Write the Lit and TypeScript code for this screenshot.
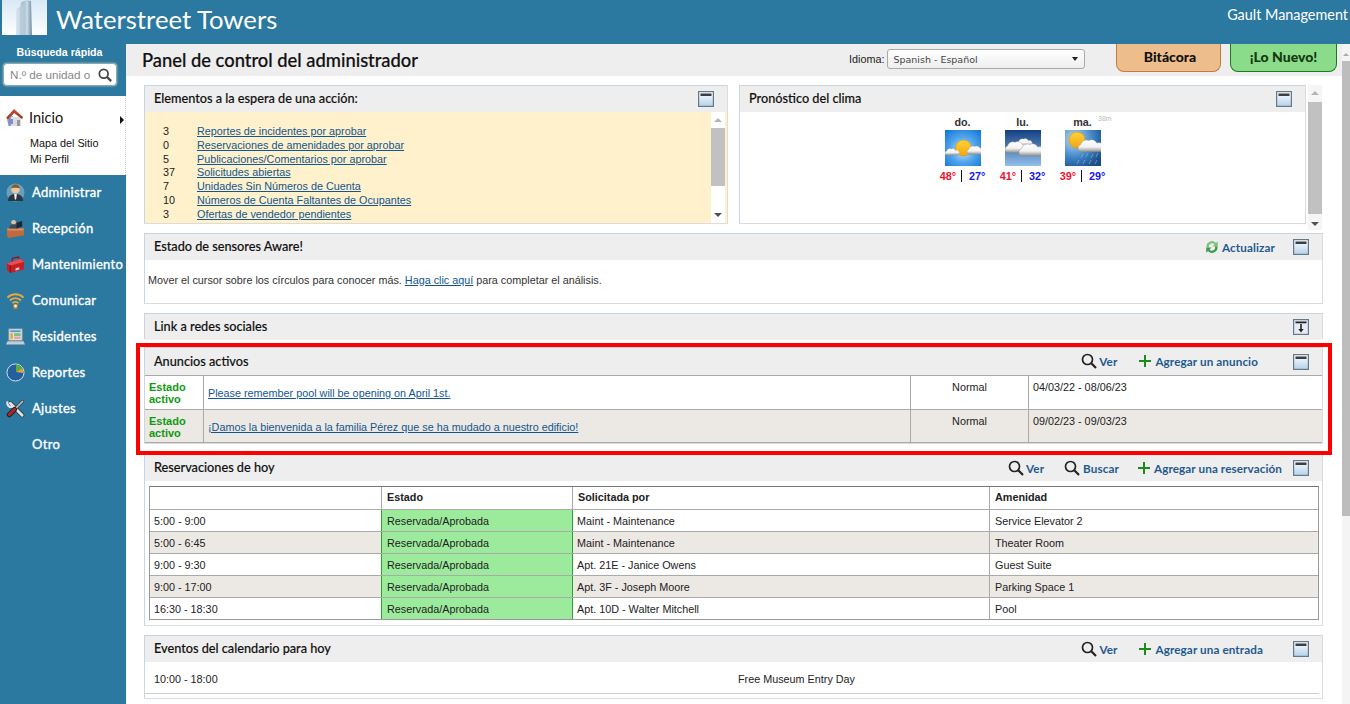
import { LitElement, html, css, svg } from "lit";
import { customElement } from "lit/decorators.js";

const minIcon = html`<svg class="mini" width="16" height="16" viewBox="0 0 16 16"><defs><linearGradient id="mg" x1="0" y1="0" x2="0" y2="1"><stop offset="0" stop-color="#ffffff"/><stop offset="1" stop-color="#b4d2ea"/></linearGradient></defs><rect x=".6" y=".6" width="14.800" height="14.800" fill="url(#mg)" stroke="#66798a" stroke-width="1.200"/><rect x="2.500" y="2.500" width="11" height="2.500" fill="#3b3f44"/></svg>`;
const expandIcon = html`<svg class="mini" width="16" height="16" viewBox="0 0 16 16"><rect x=".6" y=".6" width="14.800" height="14.800" fill="#e4edf4" stroke="#66798a" stroke-width="1.200"/><rect x="2.500" y="2.500" width="11" height="1.800" fill="#222"/><path d="M8 5v5.500" stroke="#222" stroke-width="1.600"/><path d="M5.300 10 8 13.500 10.700 10z" fill="#222"/></svg>`;
const lens = html`<svg width="16" height="16" viewBox="0 0 16 16"><circle cx="6.500" cy="6.500" r="5" fill="none" stroke="#222" stroke-width="1.700"/><path d="M10.300 10.300 15 15" stroke="#222" stroke-width="2.200"/></svg>`;
const plus = html`<svg width="14" height="14" viewBox="0 0 14 14"><path d="M7 1v12M1 7h12" stroke="#1c8a1c" stroke-width="2"/></svg>`;
const refresh = html`<svg width="14" height="14" viewBox="0 0 14 14"><path d="M1.500 7.500A5.500 5.500 0 0 1 11 3L12.800 1.200V6.500H7.500L9.500 4.500A3.200 3.200 0 0 0 4 7.500Z" fill="#7cc27c"/><path d="M12.500 6.500A5.500 5.500 0 0 1 3 11L1.200 12.800V7.500H6.500L4.500 9.500A3.200 3.200 0 0 0 10 6.500Z" fill="#3d9a50"/></svg>`;

const sideIcons: Record<string, unknown> = {
  home: svg`<defs><linearGradient id="rf" x1="0" y1="0" x2="0" y2="1"><stop offset="0" stop-color="#c9543c"/><stop offset="1" stop-color="#93301f"/></linearGradient></defs><path d="M7 9 13 13v6H3.500L2 12z" fill="#8f99ad"/><path d="M6 10h10v9H6z" fill="#dcdde2"/><path d="M1 11 9 2l9 8-1 2-8-6-6 6z" fill="url(#rf)"/><path d="M9 6 4 11v-1l5-6z" fill="#b8402c"/><rect x="4" y="12" width="4" height="5" fill="#7d8fd0"/><rect x="12" y="13" width="3" height="6" fill="#999"/>`,
  admin: svg`<circle cx="10" cy="10" r="9.500" fill="#dfe8ee" opacity=".35"/><path d="M2 19c0-5 3-7.500 8-7.500s8 2.500 8 7.500z" fill="#2a3640"/><path d="M8.500 11.500h3l-.7 5-.8 1.500-.8-1.500z" fill="#eef2f4"/><circle cx="10" cy="6.500" r="4.500" fill="#eec69a"/><path d="M5.500 6a4.500 4.500 0 0 1 9 0c-1.500-1.500-7.500-1.500-9 0z" fill="#7a5c30"/>`,
  rec: svg`<path d="M1 10h18v7l-16 3-2-2z" fill="#c06a3e"/><path d="M1 10h18l-1 2H2z" fill="#dc8e5f"/><circle cx="8" cy="3.500" r="2.500" fill="#dcc0a4"/><path d="M3.500 10c0-3 2-4.500 4.500-4.500s4 1.500 4 4.500z" fill="#3f4a52"/><path d="M11 4l6-2v6l-6 2z" fill="#20262b"/>`,
  mant: svg`<path d="M1 9 15 4l4 3v8L5 19l-4-3z" fill="#c41f28"/><path d="M1 9l14-5 4 3-14 4z" fill="#ea4e52"/><path d="M5 11v8l-1-.3v-8z" fill="#7d0f15"/><path d="M10 14l4-1.200v2.500L10 16.500z" fill="#e7c2b0"/><path d="M6 6.500l1-3 6-1.500 1 2" fill="none" stroke="#8f1219" stroke-width="1.400"/>`,
  com: svg`<g fill="none" stroke="#e9a83a" stroke-width="2"><path d="M1.500 7a12 12 0 0 1 17 0"/><path d="M4.200 10a8 8 0 0 1 11.600 0"/><path d="M6.800 12.800a4.400 4.400 0 0 1 6.400 0"/></g><path d="M7.500 14h5l-.5 5H8z" fill="#c78428"/><circle cx="10" cy="15.800" r="1.500" fill="#f8f0e0"/>`,
  res: svg`<rect x="3" y="2" width="14" height="12" fill="#e8eef2" stroke="#8a98a2"/><rect x="4.500" y="3.500" width="11" height="2" fill="#4f93d0"/><rect x="4.500" y="6.500" width="3" height="6" fill="#e9a83a"/><rect x="8.500" y="6.500" width="7" height="3" fill="#7cc07c"/><rect x="8.500" y="10" width="7" height="2.500" fill="#dca3a3"/><path d="M1.500 15h17l1.500 3.500H0z" fill="#c7ccd0"/>`,
  rep: svg`<circle cx="10" cy="10" r="9" fill="#245f9e" stroke="#dbe7f0" stroke-width="1"/><path d="M10.500 9.500V1.500a8 8 0 0 1 6.500 4z" fill="#59ad3a"/><path d="M10.500 9.500 17 5.500a8 8 0 0 1 1 5z" fill="#e5a62f"/>`,
  aju: svg`<g fill="none" stroke-linecap="round"><path d="M4.500 4.500 17 17" stroke="#33383c" stroke-width="4.600"/><path d="M4.500 4.500 17 17" stroke="#dfe3e6" stroke-width="3"/><path d="M1.500 3.500A4 4 0 0 0 7 8" stroke="#dfe3e6" stroke-width="2.400"/><path d="M17.500 2.500 9 11" stroke="#33383c" stroke-width="3"/><path d="M17.500 2.500 9 11" stroke="#bcc2c6" stroke-width="1.600"/><path d="M9 11 3.500 16.500" stroke="#1d1d1d" stroke-width="5.200"/><path d="M9 11 3.500 16.500" stroke="#b02424" stroke-width="3.400"/></g>`,
};

const nav = [
  ["admin", "Administrar"],
  ["rec", "Recepción"],
  ["mant", "Mantenimiento"],
  ["com", "Comunicar"],
  ["res", "Residentes"],
  ["rep", "Reportes"],
  ["aju", "Ajustes"],
  ["", "Otro"],
];

const waiting = [
  ["3", "Reportes de incidentes por aprobar"],
  ["0", "Reservaciones de amenidades por aprobar"],
  ["5", "Publicaciones/Comentarios por aprobar"],
  ["37", "Solicitudes abiertas"],
  ["7", "Unidades Sin Números de Cuenta"],
  ["10", "Números de Cuenta Faltantes de Ocupantes"],
  ["3", "Ofertas de vendedor pendientes"],
];

const cloud = (x: number, y: number, s: number) => svg`<g transform="translate(${x} ${y}) scale(${s})" fill="url(#cl)" stroke="#8a8a8a" stroke-width=".3"><path d="M1.500 11a3 3 0 0 1 .5-5.500 4.500 4.500 0 0 1 6-3 4.500 4.500 0 0 1 6 2 3.500 3.500 0 0 1 3 6.500z"/></g>`;
const wDefs = svg`<defs><linearGradient id="cl" x1="0" y1="0" x2="0" y2="1"><stop offset="0" stop-color="#fff"/><stop offset=".6" stop-color="#f2f2f2"/><stop offset="1" stop-color="#8f8f8f"/></linearGradient><linearGradient id="sun" x1="0" y1="0" x2="0" y2="1"><stop offset="0" stop-color="#ffd23a"/><stop offset="1" stop-color="#f4a70e"/></linearGradient><radialGradient id="sky1" cx=".5" cy=".55" r=".7"><stop offset="0" stop-color="#cfeaff"/><stop offset=".5" stop-color="#52a6ec"/><stop offset="1" stop-color="#1478d8"/></radialGradient><linearGradient id="sky2" x1="0" y1="0" x2="0" y2="1"><stop offset="0" stop-color="#143f82"/><stop offset="1" stop-color="#92bfea"/></linearGradient><radialGradient id="sky3" cx=".25" cy=".25" r=".9"><stop offset="0" stop-color="#b7dcf6"/><stop offset=".6" stop-color="#3c82c4"/><stop offset="1" stop-color="#1b4c86"/></radialGradient></defs>`;
const weather = [
  { d: "do.", hi: "48°", lo: "27°", art: svg`<rect width="36" height="36" fill="url(#sky1)"/><circle cx="18.500" cy="18" r="8" fill="url(#sun)" stroke="#c98a1a" stroke-width=".5"/>${cloud(0, 17, .75)}${cloud(22, 14, .95)}` },
  { d: "lu.", hi: "41°", lo: "32°", art: svg`<rect width="36" height="36" fill="url(#sky2)"/>${cloud(12, 7, .8)}${cloud(0, 9, 1.250)}${cloud(14, 11, 1.350)}` },
  { d: "ma.", hi: "39°", lo: "29°", art: svg`<rect width="36" height="36" fill="url(#sky3)"/><circle cx="12" cy="10" r="8" fill="url(#sun)" stroke="#c98a1a" stroke-width=".5"/>${cloud(13, 7, 1.350)}<g stroke="#9cc0de" stroke-width=".7" opacity=".8"><path d="M18 24l-2 4M23 23l-2 4M28 24l-2 4M33 23l-2 4M14 30l-2 4M20 30l-2 4M26 30l-2 4M32 30l-2 4"/></g>` },
];

const reservations = [
  ["5:00 - 9:00", "Maint - Maintenance", "Service Elevator 2"],
  ["5:00 - 6:45", "Maint - Maintenance", "Theater Room"],
  ["9:00 - 9:30", "Apt. 21E - Janice Owens", "Guest Suite"],
  ["9:00 - 17:00", "Apt. 3F - Joseph Moore", "Parking Space 1"],
  ["16:30 - 18:30", "Apt. 10D - Walter Mitchell", "Pool"],
];

@customElement("app-root")
export class AppRoot extends LitElement {
  static styles = css`
    :host { display: block; width: 1350px; height: 704px; overflow: hidden; font-family: "Liberation Sans", Arial, sans-serif; font-size: 10.800px; color: #222; background: #fff; }
    * { box-sizing: border-box; }
    a { color: #13568f; text-decoration: underline; }
    .top { height: 44px; background: #2b78a0; display: flex; color: #fff; font-family: Lato, sans-serif; }
    .logo { margin-left: 2px; width: 45px; height: 35px; display: block; flex: none; }
    .brand { margin-left: 9px; font-size: 25.700px; line-height: 38px; }
    .org { margin-left: auto; font-size: 14.400px; line-height: 30px; padding-right: 2px; white-space: nowrap; }
    .body { display: flex; height: 660px; }
    .side { width: 126px; background: #2b78a0; flex: none; }
    .quick { height: 52px; color: #fff; font-weight: bold; padding-top: 2px; }
    .quick .lbl { line-height: 12px; font-size: 10.600px; text-align: center; padding-right: 7px; }
    .sbox { margin: 5px 0 0 3px; width: 114px; height: 23px; background: #fff; border: 1px solid #8aa; border-radius: 4px; box-shadow: 0 0 2px #ccc; display: flex; align-items: center; justify-content: space-between; padding: 0 4px 0 6px; color: #888; font-weight: normal; font-size: 11.700px; }
    .sbox span { white-space: nowrap; }
    .home { height: 79px; background: #fff; padding: 12px 0 0 0; position: relative; color: #111; border-right: 1px dotted #ccc; }
    .home .row { display: flex; align-items: center; padding-left: 5px; font-family: Lato, sans-serif; font-size: 14.500px; gap: 4px; height: 18px; }
    .home .arrow { position: absolute; left: 120px; top: 20px; width: 0; height: 0; border-left: 4px solid #111; border-top: 4px solid transparent; border-bottom: 4px solid transparent; }
    .home .sub { padding: 9px 0 0 30px; line-height: 16px; }
    .nav { display: flex; flex-direction: column; }
    .nav .item { height: 36px; display: flex; align-items: center; color: #fff; font-family: Lato, sans-serif; font-size: 13px; font-weight: 400; -webkit-text-stroke: .35px #fff; letter-spacing: .3px; padding: 0 0 2px 6px; gap: 7px; white-space: nowrap; }
    .nav .ic { width: 19px; height: 19px; flex: none; }
    .main { flex: 1; min-width: 0; display: flex; flex-direction: column; position: relative; }
    .title { height: 32px; background: #eee; display: flex; align-items: center; padding: 0 8px 0 16px; position: relative; flex: none; }
    .title h1 { margin: 0; font-family: Lato, sans-serif; font-weight: 500; font-size: 18.350px; color: #111; -webkit-text-stroke: .2px #111; }
    .lang { position: absolute; left: 723px; top: 5px; display: flex; align-items: center; gap: 3px; }
    .sel { width: 198px; height: 20px; border: 1px solid #aaa; border-radius: 3px; background: linear-gradient(#fff, #eee); display: flex; align-items: center; justify-content: space-between; padding: 0 6px 0 5px; color: #444; font-family: "DejaVu Sans", sans-serif; font-size: 9.500px; }
    .sel i { width: 0; height: 0; border-top: 4px solid #222; border-left: 3.500px solid transparent; border-right: 3.500px solid transparent; }
    .btn { position: absolute; top: 0; height: 28px; border-radius: 0 0 8px 8px; font-family: Lato, sans-serif; font-weight: 900; font-size: 14px; display: flex; align-items: center; justify-content: center; padding-bottom: 2px; }
    .b1 { left: 990px; width: 105px; padding-left: 3px; background: #eebd8c; border: 1px solid #c17c41; border-top: 0; color: #111; }
    .b2 { left: 1104px; width: 107px; background: #8adb8a; border: 1px solid #1c7a1c; border-top: 0; color: #15380f; }
    .scroll { position: absolute; left: 1216px; top: 0; width: 8px; height: 660px; background: #f4f4f4; }
    .scroll .up { position: absolute; left: 1px; top: 9px; border-bottom: 3px solid #aaa; border-left: 3px solid transparent; border-right: 3px solid transparent; }
    .scroll .th { position: absolute; left: 0; top: 17px; width: 8px; height: 455px; background: #bdbdbd; }
    .content { padding: 9px 0 0 18px; display: flex; flex-direction: column; gap: 9px; width: 1197px; }
    .toprow { display: flex; height: 139px; }
    .panel { border: 1px solid #c8d6e2; background: #fff; border-bottom-color: #dcdcdc; border-right-color: #dcdcdc; display: flex; flex-direction: column; }
    .ph { height: 26px; flex: none; background: #eee; display: flex; align-items: center; padding: 0 13px 0 9px; position: relative; }
    .ph h2 { margin: 0; padding-bottom: 2px; font-family: Lato, sans-serif; font-weight: 500; font-size: 12.700px; color: #111; flex: 1; -webkit-text-stroke: .15px #111; }
    .acts { display: flex; align-items: center; font-family: Lato, sans-serif; font-size: 11.700px; font-weight: 700; letter-spacing: .1px; color: #1f5a8f; padding-bottom: 1px; }
    .act { display: flex; align-items: center; gap: 2px; }
    .act.add { gap: 3px; margin-left: 20px; }
    .act.add.w { margin-left: 21px; }
    .act.add.t { margin-left: 18px; }
    .mini { margin-left: 11px; display: block; flex: none; }
    .wait { width: 584px; }
    .waitbody { flex: 1; background: #fff1cc; position: relative; padding: 13px 0 0 18px; line-height: 13.800px; }
    .waitrow { display: flex; }
    .waitrow .n { width: 34px; }
    .vs { position: absolute; width: 14px; top: 0; bottom: 0; right: 2px; background: #f5f5f5; }
    .wait .vs { background: #fff; }
    .vs .th { position: absolute; left: 0; width: 14px; background: #c1c1c1; }
    .vs .u, .vs .d { position: absolute; left: 3px; border-left: 4px solid transparent; border-right: 4px solid transparent; }
    .vs .u { top: 6px; border-bottom: 4px solid #b5b5b5; }
    .vs .d { bottom: 6px; border-top: 4px solid #505050; }
    .vs.long { left: 0; right: 0; bottom: -6px; }
    .vs.long .d { bottom: 4px; }
    .vs.long .th { top: 17px; height: 112px; }
    .vs .th.small { top: 16px; height: 58px; }
    .clima { width: 567px; margin-left: 11px; }
    .wx { display: flex; justify-content: center; padding: 4px 0 0 0; gap: 24px; position: relative; }
    .wdefs { position: absolute; }
    .wd { width: 36px; display: flex; flex-direction: column; align-items: center; }
    .wd .nm { font-weight: bold; line-height: 13px; color: #333; height: 14px; }
    .wd svg { display: block; }
    .tmp { font-weight: bold; margin-top: 4px; display: flex; white-space: nowrap; justify-content: center; line-height: 12px; }
    .hi { color: #f0102a; padding-right: 5px; }
    .lo { color: #1515ee; padding-left: 7px; border-left: 1px solid #111; }
    .age { position: absolute; left: 358px; top: 3px; font-size: 7px; color: #bbb; }
    .outer { position: relative; width: 15px; margin-left: 2px; flex: none; }
    .aw { height: 71px; }
    .awb { padding: 14px 0 0 3px; line-height: 13px; color: #333; }
    .link { height: 26px; border-bottom: 0; }
    .ann { height: 97px; position: relative; margin-top: -1px; }
    .ann .ph { height: 28px; border-bottom: 1px solid #aaa; }
    .annrow { height: 34px; display: grid; grid-template-columns: 59px 707px 118px 1fr; border-bottom: 1px solid #aaa; }
    .annrow > div { border-right: 1px solid #aaa; padding: 5px 4px 0 4px; line-height: 12px; }
    .annrow > div:last-child { border-right: 0; }
    .alt { background: #ece8e4; }
    .annrow .st { color: #0f9b0f; font-weight: bold; font-size: 11px; }
    .annrow .tx { padding-top: 11px; }
    .annrow .ct { text-align: center; padding-right: 4px; }
    .redbox { position: absolute; left: 10px; top: 299px; width: 1196px; height: 112px; border: 4px solid #f00; pointer-events: none; }
    .rsv { height: 171px; margin-top: 2px; border-top: 0; }
    .rtable { margin: 5px 3px 0 4px; border: 1px solid #999; border-top-color: #777; }
    .rrow { display: grid; grid-template-columns: 232px 191px 417px 1fr; height: 22px; border-top: 1px solid #aaa; }
    .rrow > div { border-right: 1px solid #aaa; padding: 0 4px; line-height: 22px; overflow: hidden; white-space: nowrap; }
    .rrow.head { border-top: 0; font-weight: bold; }
    .rrow.head > div { padding-left: 5px; line-height: 21px; }
    .rrow > div:last-child { border-right: 0; padding-left: 5px; }
    .rrow .g { background: #9ceb9c; border-left: 1px solid #2ea02e; border-right: 1px solid #2ea02e; margin-left: -1px; padding-left: 5px; }
    .ev { height: 64px; }
    .evb { position: relative; margin: 0 3px 0 0; height: 32px; border-bottom: 1px solid #c8d0d6; padding: 11px 0 0 9px; line-height: 12px; }
    .evb .c { position: absolute; left: 593px; top: 11px; }
    .s7 { width: 7px; }
    .s24 { width: 24px; }
    .s19 { width: 19px; }
  `;

  render() {
    return html`
      <div class="top">
        <svg class="logo" viewBox="0 0 45 35">
          <defs><linearGradient id="tw" x1="0" y1="0" x2="1" y2="0"><stop offset="0" stop-color="#dbe8f0"/><stop offset=".45" stop-color="#a9c0d2"/><stop offset=".7" stop-color="#c4d6e2"/><stop offset="1" stop-color="#748ea6"/></linearGradient><linearGradient id="sk" x1="0" y1="0" x2="0" y2="1"><stop offset="0" stop-color="#d8e9f5"/><stop offset="1" stop-color="#ffffff"/></linearGradient></defs>
          <rect width="45" height="35" fill="url(#sk)"/>
          <path d="M14 35V9L18 7 19 2 25 0 29 1 30 35Z" fill="url(#tw)"/>
          <path d="M17 10V35M21 5V35M25 2V35" stroke="#eaf2f7" stroke-width=".5" opacity=".7"/>
        </svg>
        <div class="brand">Waterstreet Towers</div>
        <div class="org">Gault Management</div>
      </div>
      <div class="body">
        <div class="side">
          <div class="quick">
            <div class="lbl">Búsqueda rápida</div>
            <div class="sbox"><span>N.º de unidad o</span><svg width="14" height="14" viewBox="0 0 16 16"><circle cx="6.500" cy="6.500" r="5" fill="none" stroke="#444" stroke-width="2"/><path d="M10.300 10.300 15 15" stroke="#444" stroke-width="2.600"/></svg></div>
          </div>
          <div class="home">
            <div class="row"><svg width="20" height="20" viewBox="0 0 20 20">${sideIcons.home}</svg><span>Inicio</span></div>
            <span class="arrow"></span>
            <div class="sub">Mapa del Sitio<br />Mi Perfil</div>
          </div>
          <div class="nav">
            ${nav.map(([ic, label]) => html`<div class="item"><svg class="ic" viewBox="0 0 20 20">${ic ? sideIcons[ic] : ""}</svg><span>${label}</span></div>`)}
          </div>
        </div>
        <div class="main">
          <div class="title">
            <h1>Panel de control del administrador</h1>
            <div class="lang"><span>Idioma:</span><div class="sel"><span>Spanish - Español</span><i></i></div></div>
            <div class="btn b1">Bitácora</div>
            <div class="btn b2">¡Lo Nuevo!</div>
          </div>
          <div class="scroll"><span class="up"></span><div class="th"></div></div>
          <div class="content">
            <div class="toprow">
              <div class="panel wait">
                <div class="ph"><h2>Elementos a la espera de una acción:</h2>${minIcon}</div>
                <div class="waitbody">
                  ${waiting.map(([n, t]) => html`<div class="waitrow"><span class="n">${n}</span><a href="#">${t}</a></div>`)}
                  <div class="vs"><span class="u"></span><div class="th small"></div><span class="d"></span></div>
                </div>
              </div>
              <div class="panel clima">
                <div class="ph"><h2>Pronóstico del clima</h2>${minIcon}</div>
                <div class="wx">
                  <svg class="wdefs" width="0" height="0">${wDefs}</svg>
                  ${weather.map((w) => html`<div class="wd"><div class="nm">${w.d}</div><svg width="36" height="36" viewBox="0 0 36 36">${w.art}</svg><div class="tmp"><span class="hi">${w.hi}</span><span class="lo">${w.lo}</span></div></div>`)}
                  <span class="age">38m</span>
                </div>
              </div>
              <div class="outer"><div class="vs long"><span class="u"></span><div class="th"></div><span class="d"></span></div></div>
            </div>
            <div class="panel aw">
              <div class="ph"><h2>Estado de sensores Aware!</h2><div class="acts"><span class="act add">${refresh}Actualizar</span></div><span class="s7"></span>${minIcon}</div>
              <div class="awb">Mover el cursor sobre los círculos para conocer más. <a href="#">Haga clic aquí</a> para completar el análisis.</div>
            </div>
            <div class="panel link">
              <div class="ph"><h2>Link a redes sociales</h2>${expandIcon}</div>
            </div>
            <div class="panel ann">
              <div class="ph"><h2>Anuncios activos</h2><div class="acts"><span class="act">${lens}Ver</span><span class="act add w">${plus}Agregar un anuncio</span></div><span class="s24"></span>${minIcon}</div>
              <div class="annrow"><div class="st">Estado activo</div><div class="tx"><a href="#">Please remember pool will be opening on April 1st.</a></div><div class="ct">Normal</div><div>04/03/22 - 08/06/23</div></div>
              <div class="annrow alt"><div class="st">Estado activo</div><div class="tx"><a href="#">¡Damos la bienvenida a la familia Pérez que se ha mudado a nuestro edificio!</a></div><div class="ct">Normal</div><div>09/02/23 - 09/03/23</div></div>
            </div>
            <div class="panel rsv">
              <div class="ph"><h2>Reservaciones de hoy</h2><div class="acts"><span class="act">${lens}Ver</span><span class="act add">${lens}Buscar</span><span class="act add t">${plus}Agregar una reservación</span></div>${minIcon}</div>
              <div class="rtable">
                <div class="rrow head"><div></div><div>Estado</div><div>Solicitada por</div><div>Amenidad</div></div>
                ${reservations.map((r, i) => html`<div class="rrow ${i % 2 ? "alt" : ""}"><div>${r[0]}</div><div class="g">Reservada/Aprobada</div><div>${r[1]}</div><div>${r[2]}</div></div>`)}
              </div>
            </div>
            <div class="panel ev">
              <div class="ph"><h2>Eventos del calendario para hoy</h2><div class="acts"><span class="act">${lens}Ver</span><span class="act add w">${plus}Agregar una entrada</span></div><span class="s19"></span>${minIcon}</div>
              <div class="evb">10:00 - 18:00<span class="c">Free Museum Entry Day</span></div>
            </div>
          </div>
          <div class="redbox"></div>
        </div>
      </div>
    `;
  }
}
